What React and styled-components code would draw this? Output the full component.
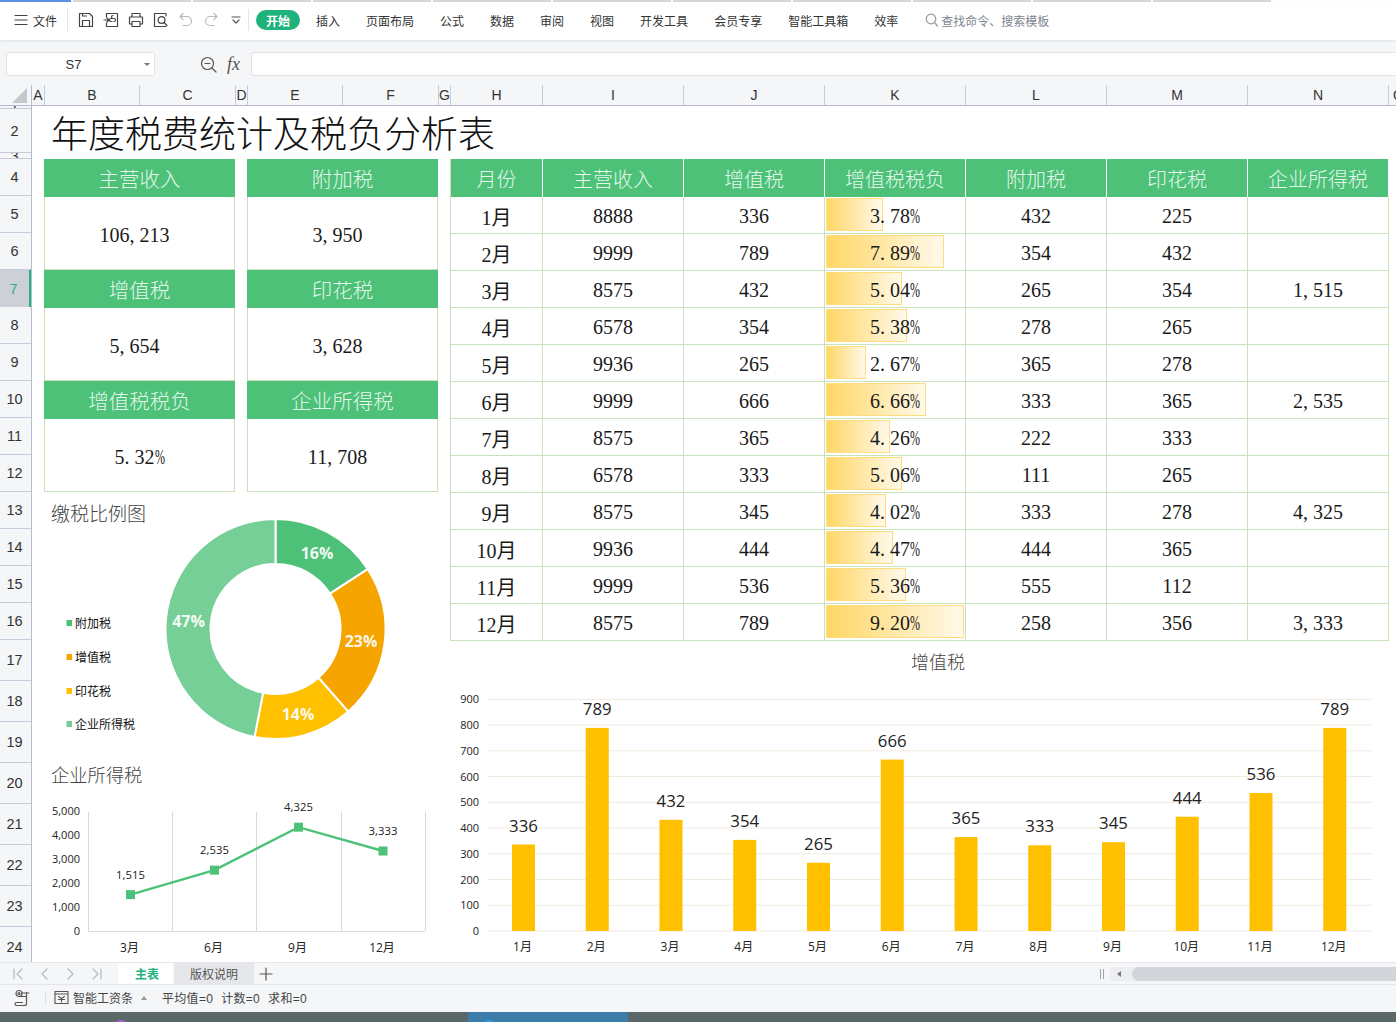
import React from "react";
import styled, { createGlobalStyle } from "styled-components";

const SANS = `"Liberation Sans","Noto Sans CJK SC",sans-serif`;
const SERIF = `"Liberation Serif","Noto Sans CJK SC",serif`;
const CHART = `"Open Sans","Noto Sans CJK SC",sans-serif`;
const GREEN = "#4DC178";
const LINE = "#C9E2BC";
const CHROME = "#F4F6F8";

const Global = createGlobalStyle`
  html, body { margin: 0; padding: 0; background: #fff; }
  * { box-sizing: border-box; }
`;

const Page = styled.div`
  position: relative; width: 1396px; height: 1022px; overflow: hidden;
  display: flex; flex-direction: column; background: #fff; font-family: ${SANS}; color: #222;
`;

/* window strip */
const Strip = styled.div`display: flex; gap: 2px; height: 2px; flex: none; background: #fff;`;
const StripTab = styled.div`
  height: 2px; flex: none;
  width: ${(p) => (p.$active ? 71 : 118)}px;
  background: ${(p) => (p.$active ? "#5B93E6" : "#D8D8D8")};
`;

/* ribbon */
const Ribbon = styled.div`
  position: relative; z-index: 2; flex: none; height: 38px; display: flex; align-items: center;
  background: #fff; box-shadow: 0 1px 3px rgba(0,0,0,.09); padding: 0 0 2px 14px; font-size: 12px;
`;
const FileLabel = styled.span`margin-left: 5px; color: #333;`;
const Sep = styled.span`width: 1px; height: 22px; background: #E2E4E7; flex: none; margin-left: ${(p) => p.$ml || 0}px;`;
const QuickIcons = styled.div`display: flex; margin-left: 5px;`;
const QuickIcon = styled.span`width: 25px; height: 20px; display: flex; align-items: center; justify-content: center;`;
const Pill = styled.span`
  margin-left: 7px; width: 44px; height: 20px; border-radius: 10px; background: #1FB27C; color: #fff;
  font-weight: 700; display: flex; align-items: center; justify-content: center;
`;
const Menu = styled.div`display: flex; gap: 26px; margin-left: 16px; color: #333; white-space: nowrap;`;
const SearchHint = styled.div`display: flex; align-items: center; gap: 3px; margin-left: 27px; color: #80858F;`;

/* formula bar */
const FormulaBar = styled.div`
  flex: none; height: 45px; background: ${CHROME}; display: flex; align-items: flex-start; padding-top: 12px;
`;
const NameBox = styled.div`
  position: relative; margin-left: 6px; width: 149px; height: 24px; background: #fff; border: 1px solid #E0E2E5;
  border-radius: 3px; display: flex; align-items: center; justify-content: center; padding-right: 14px;
  font-size: 13px; color: #333;
`;
const NameCaret = styled.span`
  position: absolute; right: 4px; top: 10px; border: 3px solid transparent; border-top: 3px solid #777;
`;
const Fx = styled.span`
  margin-left: 10px; width: 24px; font: italic 18px/24px ${SERIF}; color: #555; text-align: left;
`;
const FormulaInput = styled.div`flex: 1; height: 24px; background: #fff; border: 1px solid #E0E2E5; border-right: 0; border-radius: 3px 0 0 3px;`;
const MagIcon = styled.span`margin-left: 45px; width: 17px; height: 24px; display: flex; align-items: center;`;

/* column header */
const ColBar = styled.div`
  flex: none; height: 21px; display: flex; background: ${CHROME}; border-bottom: 1px solid #B6BAD2;
`;
const Corner = styled.div`width: 32px; flex: none; position: relative; border-right: 1px solid #B6BAD2;`;
const CornerMark = styled.span`
  position: absolute; right: 4px; bottom: 2px; width: 0; height: 0;
  border-left: 15px solid transparent; border-bottom: 15px solid #C4C7CC;
`;
const ColCell = styled.div`
  flex: none; width: ${(p) => p.$w}px; display: flex; align-items: center; justify-content: center;
  border-right: 1px solid #C6CADB; font-size: 14px; color: #333;
`;

/* sheet */
const Sheet = styled.div`flex: none; height: 856px; display: flex; overflow: hidden;`;
const RowRail = styled.div`flex: none; width: 32px; background: ${CHROME}; border-right: 1px solid #B6BAD2;`;
const RowCell = styled.div`
  height: ${(p) => p.$h}px; overflow: hidden; display: flex; align-items: center; justify-content: center;
  font-size: 14.5px; color: #333; padding-right: 2px; border-bottom: 1px solid #C6CADB;
  ${(p) => p.$on && `background: #CDD0D6; color: #2DB384; border-bottom: 0; border-right: 2px solid #1FB27C;`}
`;
const Canvas = styled.div`flex: 1; min-width: 0; padding-left: 12px; display: flex; flex-direction: column;`;
const Title = styled.h1`
  margin: 0; height: 53px; flex: none; padding: 7px 0 0 7px; font: 300 37px/46px ${SERIF}; color: #111; white-space: nowrap;
`;
const Panels = styled.div`display: flex; gap: 12px; align-items: flex-start;`;
const LeftCol = styled.div`width: 394px; flex: none; display: flex; flex-direction: column;`;
const RightCol = styled.div`width: 939px; flex: none; display: flex; flex-direction: column;`;

const KpiGrid = styled.div`display: grid; grid-template-columns: 191px 191px; column-gap: 12px; grid-auto-rows: 111px;`;
const Kpi = styled.div`display: flex; flex-direction: column;`;
const KpiHead = styled.div`
  height: 38px; flex: none; background: ${GREEN}; color: #E3F7EA; display: flex; align-items: center; justify-content: center;
  font: 300 20.5px ${SERIF};
`;
const KpiBody = styled.div`
  flex: 1; display: flex; align-items: center; justify-content: center; border: 1px solid ${LINE}; border-top: 0;
  padding: 4px ${(p) => (p.$trail ? 10 : 0)}px 0 0; font: 20px ${SERIF}; color: #1a1a1a;
`;

const Table = styled.div`
  display: grid; grid-template-columns: 92px repeat(6, 141px); grid-template-rows: 38px; grid-auto-rows: 37px;
  border-left: 1px solid ${LINE};
`;
const Th = styled.div`
  background: ${GREEN}; color: #E3F7EA; border-right: 1px solid #fff; display: flex; align-items: center; justify-content: center;
  padding-top: 1px; font: 300 20px ${SERIF};
`;
const Td = styled.div`
  position: relative; display: flex; align-items: center; justify-content: center; padding-top: 3px;
  border-right: 1px solid ${LINE}; border-bottom: 1px solid ${LINE}; font: 20px ${SERIF}; color: #1a1a1a;
`;
const DataBar = styled.span`
  position: absolute; left: 1px; top: 1px; bottom: 2px;
  border: 1px solid #FFDD7E; background: linear-gradient(90deg, #FFD765, #FFF9EA);
`;
const CellText = styled.span`position: relative;`;
const Punct = styled.span`display: inline-block; width: 10px; text-align: left;`;
const Pct = styled.span`display: inline-block; width: 10px; transform: scaleX(.6); transform-origin: 0 50%;`;

const ChartSvg = styled.svg`display: block; flex: none;`;
const Donut = styled(ChartSvg)`width: 394px; height: 268px;`;
const LineSvg = styled(ChartSvg)`width: 394px; height: 202px;`;
const BarSvg = styled(ChartSvg)`width: 939px; height: 321px;`;

/* sheet tabs */
const TabBar = styled.div`
  flex: none; height: 23px; display: flex; align-items: stretch; background: ${CHROME};
  border-top: 1px solid #E4E6E9; border-bottom: 1px solid #E4E6E9;
`;
const TabNav = styled.div`width: 118px; flex: none; display: flex; align-items: center; padding-left: 13px; gap: 15px;`;
const SheetTab = styled.div`
  display: flex; align-items: center; justify-content: center; font-size: 12px; flex: none;
  width: ${(p) => p.$w}px;
  background: ${(p) => (p.$on ? "#fff" : "#E5E7EA")};
  color: ${(p) => (p.$on ? "#1FB27C" : "#555")};
  font-weight: ${(p) => (p.$on ? 700 : 400)};
  margin-left: ${(p) => (p.$on ? 0 : 1)}px;
  padding-left: ${(p) => (p.$on ? 3 : 0)}px;
`;
const AddTab = styled.span`margin-left: 5px; display: flex; align-items: center;`;
const Scroll = styled.div`margin-left: auto; display: flex; align-items: center;`;
const Handle = styled.span`width: 4px; height: 10px; border-left: 1px solid #9EA2A9; border-right: 1px solid #9EA2A9; margin-right: 6px;`;
const Track = styled.div`
  width: 286px; height: 14px; background: #ECEEF1; display: flex; align-items: center; padding-left: 7px;
`;
const TrackArrow = styled.span`border: 3px solid transparent; border-right: 4px solid #777; border-left: 0;`;
const Thumb = styled.span`flex: 1; height: 14px; margin-left: 11px; border-radius: 7px 0 0 7px; background: #D3D5DA;`;

/* status */
const Status = styled.div`
  flex: none; height: 27px; background: ${CHROME}; display: flex; align-items: center; padding: 0 0 2px 14px; font-size: 12px; color: #444;
`;
const StatusSep = styled.span`width: 1px; height: 14px; background: #DDDFE2; margin: 0 8px 0 14px;`;
const StatusName = styled.span`margin-left: 4px;`;
const StatusCaret = styled.span`margin: 0 15px 0 8px; border: 3.5px solid transparent; border-bottom: 4px solid #999; border-top: 0;`;
const StatusItem = styled.span`margin-right: 8px; letter-spacing: .3px;`;

/* task bar */
const Taskbar = styled.div`flex: 1; position: relative; background: #5A6769; display: flex; overflow: hidden;`;
const TaskActive = styled.div`margin-left: 468px; width: 160px; background: #3B7CA8;`;
const TaskDot = styled.span`
  position: absolute; top: 8px; left: ${(p) => p.$x}px; width: 14px; height: 14px; border-radius: 50%; background: ${(p) => p.$c};
`;

const Stroke = ({ w = 16, h = 16, c = "#444", sw = 1.2, children }) => (
  <svg width={w} height={h} viewBox={`0 0 ${w} ${h}`} fill="none" stroke={c} strokeWidth={sw} strokeLinecap="round" strokeLinejoin="round">
    {children}
  </svg>
);

const COLS = [["A", 13], ["B", 95], ["C", 96], ["D", 12], ["E", 95], ["F", 96], ["G", 12], ["H", 92], ["I", 141], ["J", 141], ["K", 141], ["L", 141], ["M", 141], ["N", 141], ["O", 20]];
const ROWS = [["1", 3], ["2", 44], ["3", 6], ...Array.from({ length: 13 }, (_, i) => [String(i + 4), 37]), ...Array.from({ length: 8 }, (_, i) => [String(i + 17), 41])];

const KPIS = [["主营收入", "106,213", true], ["附加税", "3,950", true], ["增值税", "5,654", true], ["印花税", "3,628", true], ["增值税税负", "5.32%", false], ["企业所得税", "11,708", true]];
const HEADS = ["月份", "主营收入", "增值税", "增值税税负", "附加税", "印花税", "企业所得税"];
const DATA = [
  ["1月", 8888, 336, 3.78, 432, 225, ""],
  ["2月", 9999, 789, 7.89, 354, 432, ""],
  ["3月", 8575, 432, 5.04, 265, 354, "1,515"],
  ["4月", 6578, 354, 5.38, 278, 265, ""],
  ["5月", 9936, 265, 2.67, 365, 278, ""],
  ["6月", 9999, 666, 6.66, 333, 365, "2,535"],
  ["7月", 8575, 365, 4.26, 222, 333, ""],
  ["8月", 6578, 333, 5.06, 111, 265, ""],
  ["9月", 8575, 345, 4.02, 333, 278, "4,325"],
  ["10月", 9936, 444, 4.47, 444, 365, ""],
  ["11月", 9999, 536, 5.36, 555, 112, ""],
  ["12月", 8575, 789, 9.2, 258, 356, "3,333"],
];

const Num = ({ value }) => (
  <>
    {[...String(value)].map((ch, i) =>
      ch === "." || ch === "," ? <Punct key={i}>{ch}</Punct> : ch === "%" ? <Pct key={i}>{ch}</Pct> : ch
    )}
  </>
);

const DONUT = [
  { name: "附加税", v: 3950, c: "#4EC178", label: "16%", lx: 317, ly: 553, ky: 623 },
  { name: "增值税", v: 5654, c: "#F5A400", label: "23%", lx: 361, ly: 641, ky: 657 },
  { name: "印花税", v: 3628, c: "#FFC000", label: "14%", lx: 298, ly: 714, ky: 691 },
  { name: "企业所得税", v: 11708, c: "#76CF96", label: "47%", lx: 188.5, ly: 621, ky: 724 },
];
function arc(cx, cy, R, r, a0, a1) {
  const p = (rad, a) => [cx + rad * Math.sin(a), cy - rad * Math.cos(a)];
  const [x0, y0] = p(R, a0), [x1, y1] = p(R, a1), [x2, y2] = p(r, a1), [x3, y3] = p(r, a0);
  const big = a1 - a0 > Math.PI ? 1 : 0;
  return `M${x0} ${y0}A${R} ${R} 0 ${big} 1 ${x1} ${y1}L${x2} ${y2}A${r} ${r} 0 ${big} 0 ${x3} ${y3}Z`;
}
const total = DONUT.reduce((s, d) => s + d.v, 0);
let acc = 0;
const SLICES = DONUT.map((d) => {
  const a0 = (acc / total) * Math.PI * 2;
  acc += d.v;
  return { ...d, path: arc(275.5, 629, 110, 65, a0, (acc / total) * Math.PI * 2) };
});

const LINE_PTS = [["3月", 1515, "1,515", 130.5], ["6月", 2535, "2,535", 214.5], ["9月", 4325, "4,325", 298.5], ["12月", 3333, "3,333", 383]];
const ly = (v) => 931 - v * 0.024;
const BAR_DATA = DATA.map((r) => [r[0], r[2]]);
const by = (v) => 931 - v * 0.2574;

export default function App() {
  return (
    <Page>
      <Global />
      <Strip>
        <StripTab $active />
        {Array.from({ length: 10 }, (_, i) => <StripTab key={i} />)}
      </Strip>

      <Ribbon>
        <Stroke w={14} h={12}><path d="M1 1.5h12M1 6h12M1 10.5h12" /></Stroke>
        <FileLabel>文件</FileLabel>
        <Sep $ml={10} />
        <QuickIcons>
          <QuickIcon><Stroke><path d="M1.5 1.5h10l3 3v10h-13z M4.5 14.5v-6h7v6 M4.5 1.5v2.5h4" /></Stroke></QuickIcon>
          <QuickIcon><Stroke><path d="M3.5 5V1.5h11v13h-11V11 M1 8h5l-2-2M6 8l-2 2 M9 9.5h-1a1.5 1.5 0 0 1 0-3h3a1.5 1.5 0 0 1 0 3 M10 6.5 a1.5 1.5 0 0 1 0-3" /></Stroke></QuickIcon>
          <QuickIcon><Stroke><path d="M4 5V1.5h8V5 M4 12H1.5V5h13v7H12 M4 9.5h8v5H4z" /></Stroke></QuickIcon>
          <QuickIcon><Stroke><path d="M13 4V1.5H1.5v13H13" /><circle cx="8.5" cy="8" r="3.4" /><path d="M11 10.5l3 3" /></Stroke></QuickIcon>
          <QuickIcon><Stroke c="#B7BABF"><path d="M5 1.5L2 4.5l3 3 M2 4.5h7a4.5 4.5 0 0 1 0 9H5" /></Stroke></QuickIcon>
          <QuickIcon><Stroke c="#B7BABF"><path d="M11 1.5l3 3-3 3 M14 4.5H7a4.5 4.5 0 0 0 0 9h4" /></Stroke></QuickIcon>
          <QuickIcon><Stroke w={10} h={10} c="#555"><path d="M1 2h8M2 5l3 3 3-3" /></Stroke></QuickIcon>
        </QuickIcons>
        <Sep />
        <Pill>开始</Pill>
        <Menu>
          {["插入", "页面布局", "公式", "数据", "审阅", "视图", "开发工具", "会员专享", "智能工具箱", "效率"].map((t) => <span key={t}>{t}</span>)}
        </Menu>
        <SearchHint>
          <Stroke w={13} h={14} c="#999"><circle cx="6" cy="6" r="4.8" /><path d="M9.5 9.5l3 3.5" /></Stroke>
          查找命令、搜索模板
        </SearchHint>
      </Ribbon>

      <FormulaBar>
        <NameBox>S7<NameCaret /></NameBox>
        <MagIcon>
          <Stroke w={17} h={17} c="#555"><circle cx="7.5" cy="7.5" r="6" /><path d="M5 7.5h5M12 12l4 4" /></Stroke>
        </MagIcon>
        <Fx>fx</Fx>
        <FormulaInput />
      </FormulaBar>

      <ColBar>
        <Corner><CornerMark /></Corner>
        {COLS.map(([c, w]) => <ColCell key={c} $w={w}>{c}</ColCell>)}
      </ColBar>

      <Sheet>
        <RowRail>
          {ROWS.map(([n, h]) => <RowCell key={n} $h={h} $on={n === "7"}>{n}</RowCell>)}
        </RowRail>
        <Canvas>
          <Title>年度税费统计及税负分析表</Title>
          <Panels>
            <LeftCol>
              <KpiGrid>
                {KPIS.map(([h, v, trail]) => (
                  <Kpi key={h}>
                    <KpiHead>{h}</KpiHead>
                    <KpiBody $trail={trail}><span><Num value={v} /></span></KpiBody>
                  </Kpi>
                ))}
              </KpiGrid>

              <Donut viewBox="44 492 394 268">
                <text x="51" y="521" fontFamily={SERIF} fontSize="19" fontWeight="300" fill="#444">缴税比例图</text>
                {SLICES.map((s) => <path key={s.name} d={s.path} fill={s.c} stroke="#fff" strokeWidth="2" />)}
                {SLICES.map((s) => (
                  <text key={s.label} x={s.lx} y={s.ly + 5.5} textAnchor="middle" fontFamily={CHART} fontWeight="700" fontSize="16" fill="#fff" fillOpacity=".93">{s.label}</text>
                ))}
                {SLICES.map((s) => (
                  <g key={s.name + "k"}>
                    <rect x="66.5" y={s.ky - 3} width="5.5" height="6" fill={s.c} />
                    <text x="75" y={s.ky + 4.5} fontFamily={CHART} fontSize="12" fill="#111">{s.name}</text>
                  </g>
                ))}
              </Donut>

              <LineSvg viewBox="44 760 394 202">
                <text x="51" y="782" fontFamily={SERIF} fontSize="18.3" fontWeight="300" fill="#444">企业所得税</text>
                {[88, 172, 256, 341, 425].map((x) => <line key={x} x1={x + 0.5} x2={x + 0.5} y1="812" y2="931" stroke="#DADADA" />)}
                <line x1="88" x2="425" y1="931.5" y2="931.5" stroke="#DADADA" />
                {[0, 1000, 2000, 3000, 4000, 5000].map((v) => (
                  <text key={v} x="80" y={ly(v) + 4} textAnchor="end" fontFamily={CHART} fontSize="11" fill="#222">{v ? v.toLocaleString("en-US") : "0"}</text>
                ))}
                <polyline points={LINE_PTS.map((p) => `${p[3]},${ly(p[1])}`).join(" ")} fill="none" stroke="#4EC178" strokeWidth="2.4" />
                {LINE_PTS.map((p) => (
                  <g key={p[0]}>
                    <rect x={p[3] - 4.5} y={ly(p[1]) - 4.5} width="9" height="9" fill="#4EC178" />
                    <text x={p[3]} y={ly(p[1]) - 16} textAnchor="middle" fontFamily={CHART} fontSize="11.3" fill="#222">{p[2]}</text>
                    <text x={p[3] - 1} y="951.5" textAnchor="middle" fontFamily={CHART} fontSize="12" fill="#222">{p[0]}</text>
                  </g>
                ))}
              </LineSvg>
            </LeftCol>

            <RightCol>
              <Table>
                {HEADS.map((h) => <Th key={h}>{h}</Th>)}
                {DATA.map((r) => r.map((v, i) => (
                  <Td key={r[0] + i}>
                    {i === 3 && <DataBar style={{ width: `${v * 15}px` }} />}
                    <CellText><Num value={i === 3 ? `${v.toFixed(2)}%` : v} /></CellText>
                  </Td>
                )))}
              </Table>
              <BarSvg viewBox="450 641 939 321">
                <text x="938" y="669" textAnchor="middle" fontFamily={SERIF} fontSize="18" fontWeight="300" fill="#444">增值税</text>
                {Array.from({ length: 10 }, (_, i) => i * 100).map((v) => (
                  <g key={v}>
                    <line x1="487" x2="1372" y1={by(v)} y2={by(v)} stroke="#F3EADF" />
                    <text x="479" y={by(v) + 4} textAnchor="end" fontFamily={CHART} fontSize="11" fill="#222">{v}</text>
                  </g>
                ))}
                {BAR_DATA.map(([m, v], i) => {
                  const cx = 523.5 + 73.75 * i;
                  return (
                    <g key={m}>
                      <rect x={cx - 11.5} y={by(v)} width="23" height={931 - by(v)} fill="#FFC000" />
                      <text x={cx} y={by(v) - 13} textAnchor="middle" fontFamily={CHART} fontSize="16.8" fill="#222">{v}</text>
                      <text x={cx - 1} y="950.5" textAnchor="middle" fontFamily={CHART} fontSize="12" fill="#222">{m}</text>
                    </g>
                  );
                })}
              </BarSvg>
            </RightCol>
          </Panels>
        </Canvas>
      </Sheet>

      <TabBar>
        <TabNav>
          <Stroke w={11} h={12} c="#B5B8BF"><path d="M1 1v10M9 1L4 6l5 5" /></Stroke>
          <Stroke w={11} h={12} c="#B5B8BF"><path d="M8 1L3 6l5 5" /></Stroke>
          <Stroke w={11} h={12} c="#B5B8BF"><path d="M3 1l5 5-5 5" /></Stroke>
          <Stroke w={11} h={12} c="#B5B8BF"><path d="M2 1l5 5-5 5M10 1v10" /></Stroke>
        </TabNav>
        <SheetTab $on $w={55}>主表</SheetTab>
        <SheetTab $w={80}>版权说明</SheetTab>
        <AddTab><Stroke w={14} h={14} c="#555"><path d="M7 1v12M1 7h12" /></Stroke></AddTab>
        <Scroll>
          <Handle />
          <Track><TrackArrow /><Thumb /></Track>
        </Scroll>
      </TabBar>

      <Status>
        <Stroke w={17} h={18} c="#555">
          <circle cx="5" cy="4.5" r="3" /><circle cx="5" cy="4.5" r="1" />
          <path d="M5 7.5h7.5V3.5M8 4h7M12.5 8v6.5a2 2 0 0 1-2 2H2.5a1.5 1.5 0 0 1 0-3h6" />
        </Stroke>
        <StatusSep />
        <Stroke w={15} h={15} c="#555" sw={1.1}><path d="M1 1.5h13v12H1zM1 4h13M4.5 6.5l3 2 3-2M7.5 8.5v3.5M4.5 9.5h6" /></Stroke>
        <StatusName>智能工资条</StatusName>
        <StatusCaret />
        <StatusItem>平均值=0</StatusItem>
        <StatusItem>计数=0</StatusItem>
        <StatusItem>求和=0</StatusItem>
      </Status>

      <Taskbar>
        <TaskDot $x={114} $c="#B45AD8" />
        <TaskActive />
        <TaskDot $x={482} $c="#2E9BE8" />
      </Taskbar>
    </Page>
  );
}
